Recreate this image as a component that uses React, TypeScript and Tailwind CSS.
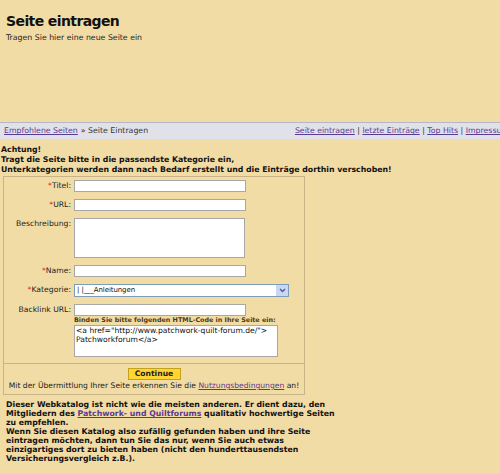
import React from "react";

const font = { fontFamily: '"DejaVu Sans", Verdana, sans-serif' };

function Label({ text, req }: { text: string; req?: boolean }) {
  return (
    <div className="w-[70px] shrink-0 pr-[3px] text-right text-[7.7px] leading-[12px] text-[#222]">
      {req && <span className="text-[#d22]">*</span>}
      {text}
    </div>
  );
}

function Field({ w }: { w: string }) {
  return <div className={`h-[12px] ${w} border border-[#a7a7a7] bg-white`} />;
}

export default function App() {
  return (
    <div style={font} className="w-[500px] h-[474px] overflow-hidden bg-[#f2dca6] text-[#111]">
      <div className="px-[6px] pt-[12px]">
        <h1 className="text-[14px] font-bold leading-[18px] tracking-[-0.6px]">Seite eintragen</h1>
        <p className="mt-[3px] text-[7.8px] leading-[10px] text-[#222]">Tragen Sie hier eine neue Seite ein</p>
      </div>

      <div className="mt-[79px] flex h-[17px] w-[513px] items-center border-t border-[#b6b6c4] bg-[#e1e1ea] px-[4px] text-[7.8px] whitespace-nowrap">
        <a className="text-[#5b3a91] underline">Empfohlene Seiten</a>
        <span className="ml-[3px] text-[#333]">» Seite Eintragen</span>
        <span className="ml-auto text-[#333]">
          <a className="text-[#5b3a91] underline">Seite eintragen</a> |{" "}
          <a className="text-[#5b3a91] underline">letzte Einträge</a> |{" "}
          <a className="text-[#5b3a91] underline">Top Hits</a> |{" "}
          <a className="text-[#5b3a91] underline">Impressum</a>
        </span>
      </div>

      <div className="mt-[6px] px-[1px] text-[7.8px] font-bold leading-[10px] whitespace-nowrap">
        Achtung!
        <br />
        Tragt die Seite bitte in die passendste Kategorie ein,
        <br />
        Unterkategorien werden dann nach Bedarf erstellt und die Einträge dorthin verschoben!
      </div>

      <div className="ml-[3px] mt-[1px] w-[302px] border border-[#c9b489]">
        <div className="flex flex-col gap-[7px] pt-[3px]">
          <div className="flex items-start">
            <Label text="Titel:" req />
            <Field w="w-[172px]" />
          </div>
          <div className="flex items-start">
            <Label text="URL:" req />
            <Field w="w-[172px]" />
          </div>
          <div className="flex items-start">
            <Label text="Beschreibung:" />
            <div className="h-[40px] w-[171px] border border-[#a7a7a7] bg-white" />
          </div>
          <div className="flex items-start">
            <Label text="Name:" req />
            <Field w="w-[172px]" />
          </div>
          <div className="flex items-start">
            <Label text="Kategorie:" req />
            <div className="flex h-[13px] w-[215px] items-center border border-[#7f9db9] bg-white">
              <span className="flex-1 pl-[2px] text-[7px] leading-[11px] text-[#111] tracking-[-0.1px]">| |___Anleitungen</span>
              <span className="flex h-[11px] w-[12px] items-center justify-center bg-[#c7d7f5]">
                <svg width="7" height="5" viewBox="0 0 7 5">
                  <path d="M1 1 L3.5 3.5 L6 1" fill="none" stroke="#4d6185" strokeWidth="1.4" />
                </svg>
              </span>
            </div>
          </div>
          <div className="flex items-start">
            <Label text="Backlink URL:" />
            <div className="flex flex-col">
              <Field w="w-[172px]" />
              <div className="mt-[1px] text-[6.4px] font-bold leading-[7px] text-[#4a3a10] whitespace-nowrap">
                Binden Sie bitte folgenden HTML-Code in Ihre Seite ein:
              </div>
              <div className="mt-[1px] h-[32px] w-[204px] border border-[#a7a7a7] bg-white px-[1px] text-[7.6px] leading-[9px] text-[#111] whitespace-nowrap">
                &lt;a href="http://www.patchwork-quilt-forum.de/"&gt;
                <br />
                Patchworkforum&lt;/a&gt;
              </div>
            </div>
          </div>
        </div>
        <div className="mt-[6px] border-t border-[#c9b489] pt-[4px] text-center">
          <div className="mx-auto h-[12px] w-[53px] border border-[#c4a11d] bg-[#ffd533] text-[7.6px] font-bold leading-[10px] text-[#222]">
            Continue
          </div>
          <div className="mt-[1px] pb-[3px] text-[7.6px] leading-[10px] text-[#222] whitespace-nowrap">
            Mit der Übermittlung Ihrer Seite erkennen Sie die{" "}
            <a className="text-[#5b3a91] underline">Nutzungsbedingungen</a> an!
          </div>
        </div>
      </div>

      <div className="mt-[5px] px-[6px] text-[7.8px] font-bold leading-[9px] whitespace-nowrap">
        Dieser Webkatalog ist nicht wie die meisten anderen. Er dient dazu, den
        <br />
        Mitgliedern des <a className="text-[#5b3a91] underline">Patchwork- und Quiltforums</a> qualitativ hochwertige Seiten
        <br />
        zu empfehlen.
        <br />
        Wenn Sie diesen Katalog also zufällig gefunden haben und ihre Seite
        <br />
        eintragen möchten, dann tun Sie das nur, wenn Sie auch etwas
        <br />
        einzigartiges dort zu bieten haben (nicht den hunderttausendsten
        <br />
        Versicherungsvergleich z.B.).
      </div>
    </div>
  );
}
